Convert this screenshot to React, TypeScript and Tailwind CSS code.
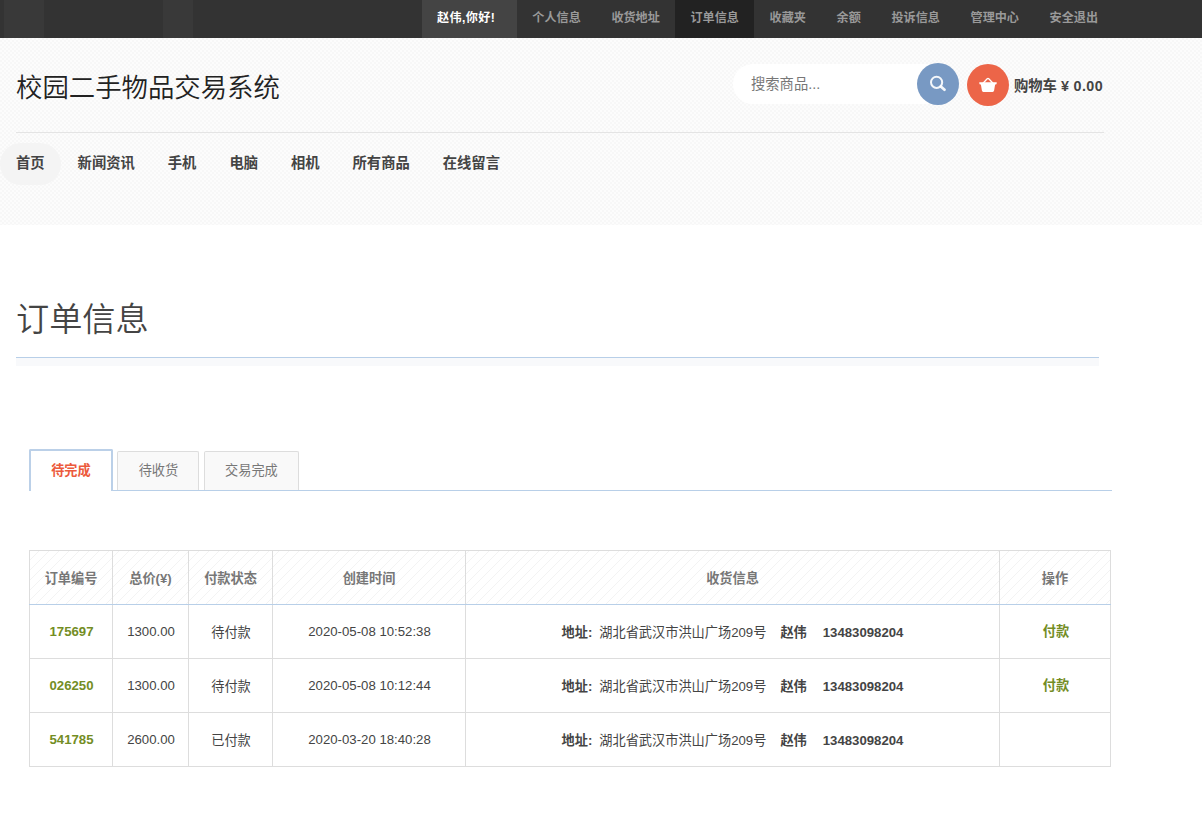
import { useState } from "react";

interface Order {
    id: string;
    total: string;
    status: string;
    createdAt: string;
    payable: boolean;
}

const accountLinks = ["个人信息", "收货地址", "订单信息", "收藏夹", "余额", "投诉信息", "管理中心", "安全退出"];

const categories = ["首页", "新闻资讯", "手机", "电脑", "相机", "所有商品", "在线留言"];

const tabs = ["待完成", "待收货", "交易完成"];

const columns = ["订单编号", "总价(¥)", "付款状态", "创建时间", "收货信息", "操作"];

const orders: Order[] = [
    { id: "175697", total: "1300.00", status: "待付款", createdAt: "2020-05-08 10:52:38", payable: true },
    { id: "026250", total: "1300.00", status: "待付款", createdAt: "2020-05-08 10:12:44", payable: true },
    { id: "541785", total: "2600.00", status: "已付款", createdAt: "2020-03-20 18:40:28", payable: false },
];

function TopBar() {
    return (
        <div className="flex h-[38px] bg-[#333] bg-[linear-gradient(to_right,transparent_4px,#393939_4px,#393939_44px,transparent_44px,transparent_163px,#393939_163px,#393939_193px,transparent_193px)] pl-[422px] text-[12.1px] leading-[36px] font-bold whitespace-nowrap text-[#999]">
            <span className="w-[95px] bg-[#444] pl-[15px] tracking-[0.4px] text-white">赵伟,你好!</span>
            {accountLinks.map((link) => (
                <a
                    key={link}
                    href="#"
                    className={link === "订单信息" ? "bg-[#222] px-[15.35px]" : "px-[15.35px]"}
                >
                    {link}
                </a>
            ))}
        </div>
    );
}

function Header() {
    const [keyword, setKeyword] = useState("");

    return (
        <header className="h-[187px] bg-[#fcfcfc] bg-[conic-gradient(#f7f7f7_25%,transparent_0_50%,#f7f7f7_0_75%,transparent_0)] bg-[length:4px_4px]">
            <div className="ml-4 flex h-[95px] w-[1088px] border-b border-[#e4e4e4]">
                <h1 className="w-[717px] pt-[30px] text-[26.4px] leading-[40px] font-[350] text-[#222]">校园二手物品交易系统</h1>
                <form className="mt-[25px] flex w-[226px]" onSubmit={(e) => e.preventDefault()}>
                    <div className="mt-px -mr-5 h-10 w-[204px] rounded-l-full bg-white">
                        <input
                            value={keyword}
                            onChange={(e) => setKeyword(e.target.value)}
                            placeholder="搜索商品..."
                            className="h-10 w-full pl-[18px] text-[14.3px] text-[#777] outline-none placeholder:text-[#777]"
                        />
                    </div>
                    <button className="relative flex size-[42px] shrink-0 items-center justify-center rounded-full bg-[#7899c3]">
                        <svg width="18" height="18" viewBox="0 0 18 18" fill="none" stroke="#fff" strokeOpacity="0.92">
                            <circle cx="7.6" cy="7.3" r="5.6" strokeWidth="2" />
                            <path d="M11.8 11.5l3.7 3.2" strokeWidth="2.8" strokeLinecap="round" />
                        </svg>
                    </button>
                </form>
                <div className="mt-[26px] ml-2 flex h-[42px] items-center whitespace-nowrap">
                    <span className="flex size-[42px] items-center justify-center rounded-full bg-[#ec6548]">
                        <svg width="18" height="16" viewBox="0 0 18 16" fill="#fff">
                            <path d="M4 6.2L8.2 1.8Q9 1.2 9.8 1.8L14 6.2" fill="none" stroke="#fff" strokeWidth="1.3" />
                            <path d="M0.6 5.2h16.8q.5 0 .4.6l-.3 1.1q-.1.4-.6.5l-.8.1-1 6.1q-.2 1.4-1.5 1.4H4.4Q3.1 15 2.9 13.6l-1-6.1-.8-.1q-.5-.1-.6-.5L.2 5.8q-.1-.6.4-.6z" />
                        </svg>
                    </span>
                    <span className="mt-[2px] ml-[5px] text-[14.3px] font-bold text-[#444]">
                        购物车 <span className="tracking-[0.4px]">¥ 0.00</span>
                    </span>
                </div>
            </div>
            <nav className="mt-[10px] -ml-[0.5px] flex text-[14.3px] leading-[40px] font-bold text-[#444]">
                {categories.map((name, i) => (
                    <a
                        key={name}
                        href="#"
                        className={i === 0 ? "h-[42px] rounded-full bg-[#f4f4f4] px-[16.5px]" : "h-[42px] px-[16.5px]"}
                    >
                        {name}
                    </a>
                ))}
            </nav>
        </header>
    );
}

function OrderTable() {
    return (
        <table className="mt-[59px] w-[1082px] table-fixed border-collapse border border-[#ddd] text-center text-[#444]">
            <colgroup>
                <col className="w-[83px]" />
                <col className="w-[76px]" />
                <col className="w-[84px]" />
                <col className="w-[193px]" />
                <col className="w-[534px]" />
                <col className="w-[111px]" />
            </colgroup>
            <thead>
                <tr className="h-[54px] bg-[repeating-linear-gradient(135deg,#fff_0_6.07px,#f3f3f3_6.07px_7.07px)] text-[#777]">
                    {columns.map((column) => (
                        <th key={column} className="border border-[#ddd] border-b-[#b8cfe8] pt-[2px] font-bold">
                            {column}
                        </th>
                    ))}
                </tr>
            </thead>
            <tbody>
                {orders.map((order) => (
                    <tr key={order.id} className="h-[54px]">
                        <td className="border border-[#ddd] pl-px font-bold text-[#738d24]">{order.id}</td>
                        <td className="border border-[#ddd] pl-px">{order.total}</td>
                        <td className="border border-[#ddd] pt-[2px] pl-px">{order.status}</td>
                        <td className="border border-[#ddd] pl-px">{order.createdAt}</td>
                        <td className="border border-[#ddd] pt-[2px]">
                            <b>地址:</b>
                            <span className="ml-[7px]">湖北省武汉市洪山广场209号</span>
                            <b className="ml-[14px]">赵伟</b>
                            <b className="ml-[16px]">13483098204</b>
                        </td>
                        <td className="border border-[#ddd] pl-[2px]">
                            {order.payable && (
                                <a href="#" className="font-bold text-[#738d24]">
                                    付款
                                </a>
                            )}
                        </td>
                    </tr>
                ))}
            </tbody>
        </table>
    );
}

export default function App() {
    const [active, setActive] = useState(0);

    return (
        <div className="h-[813px] w-[1202px] overflow-hidden bg-white font-['Liberation_Sans','Noto_Sans_CJK_SC',sans-serif] text-[13.2px] leading-5">
            <TopBar />
            <Header />
            <main>
                {/* Page title */}
                <div className="ml-4 h-[141px] w-[1083px] border-b-8 border-[#f8f9fb]">
                    <h2 className="h-full border-b border-[#b8cfe8] pt-[70px] text-[33.2px] leading-[50px] font-[350] text-[#444]">
                        订单信息
                    </h2>
                </div>
                <section className="mt-[83px] ml-[29px] w-[1083px]">
                    {/* Order status tabs */}
                    <div className="flex h-[42px] items-end border-b border-[#b8cfe8]">
                        {tabs.map((tab, i) => (
                            <button
                                key={tab}
                                onClick={() => setActive(i)}
                                className={
                                    active === i
                                        ? "relative -mb-px h-[42px] rounded-t-xs border-2 border-b-0 border-[#bbd0e8] bg-white px-[20.2px] font-bold text-[#ec5a3c]"
                                        : "ml-[4.5px] h-[39px] rounded-t-xs border border-b-0 border-[#ddd] bg-[#f9f9f9] px-[20.2px] text-[#777]"
                                }
                            >
                                {tab}
                            </button>
                        ))}
                    </div>
                    <OrderTable />
                </section>
            </main>
        </div>
    );
}
